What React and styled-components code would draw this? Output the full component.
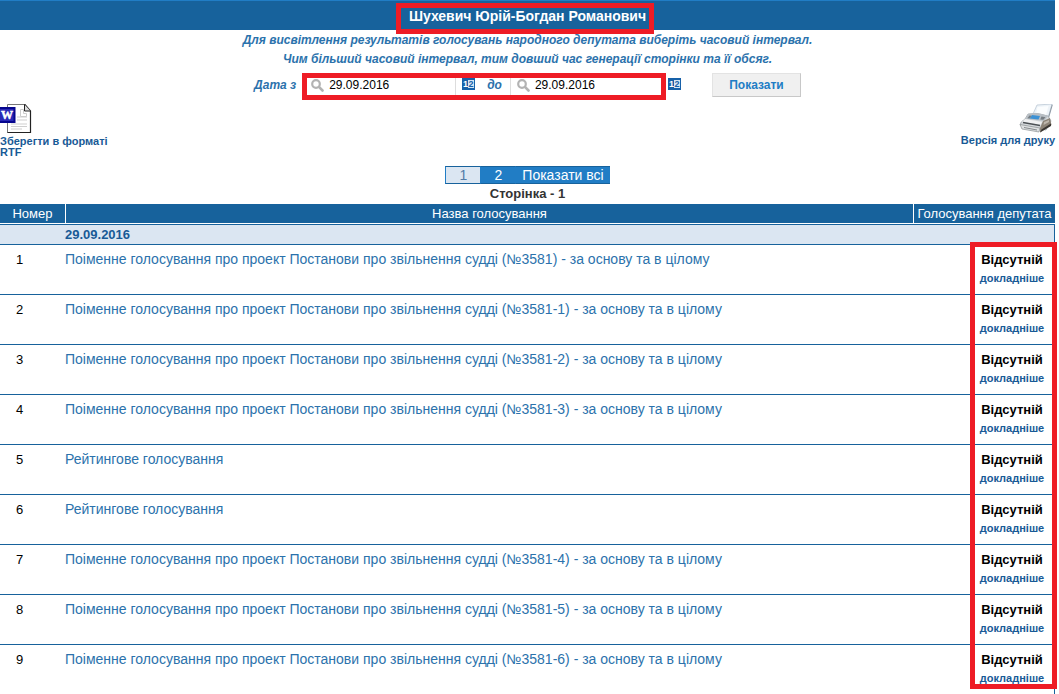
import styled, { createGlobalStyle } from "styled-components";

const colors = {
  navy: "#17629c",
  blue: "#217dc5",
  link: "#2b72ac",
  deepLink: "#185a96",
  pale: "#dbe6f2",
  red: "#ee1c25",
};

const project =
  "Поіменне голосування про проект Постанови про звільнення судді";

const votes = [
  `${project} (№3581) - за основу та в цілому`,
  `${project} (№3581-1) - за основу та в цілому`,
  `${project} (№3581-2) - за основу та в цілому`,
  `${project} (№3581-3) - за основу та в цілому`,
  "Рейтингове голосування",
  "Рейтингове голосування",
  `${project} (№3581-4) - за основу та в цілому`,
  `${project} (№3581-5) - за основу та в цілому`,
  `${project} (№3581-6) - за основу та в цілому`,
];

function CalendarIcon() {
  return (
    <svg width="13" height="12" viewBox="0 0 13 12" aria-hidden="true">
      <rect width="13" height="12" fill="#1761a9" />
      <rect x="6" y="2" width="6" height="8" fill="#d5e5f4" />
      <text x="1" y="9" fontSize="9" fontWeight="bold" fill="#fff">
        1
      </text>
      <text x="6.500" y="9" fontSize="9" fontWeight="bold" fill="#1761a9">
        2
      </text>
    </svg>
  );
}

function SearchIcon() {
  return (
    <svg width="13" height="13" viewBox="0 0 13 13" aria-hidden="true">
      <circle cx="5" cy="5" r="3.8" fill="none" stroke="#b3b3b3" strokeWidth="2.2" />
      <path d="M8.200 8.200l3.300 3.300" stroke="#b3b3b3" strokeWidth="2.600" strokeLinecap="round" />
    </svg>
  );
}

function WordIcon() {
  return (
    <svg width="32" height="30" viewBox="0 0 32 30" aria-hidden="true">
      <path d="M7.5.5h17l6 6.500v21.500h-23z" fill="#fff" stroke="#777" />
      <path d="M24.500 0l6 7v21.500H7.500" fill="none" stroke="#222" strokeWidth="1.200" />
      <path d="M24.500.5v6.500h6" fill="#ddd" stroke="#222" />
      <path
        d="M17 13h10M17 16h10M11 20h16M11 22.500h16M11 25h11"
        stroke="#cfcfcf"
      />
      <path d="M20.500 5.500h3v4h3v3h-6z" fill="#fff" stroke="#ccc" />
      <rect y="3" width="15.500" height="16" fill="#06068e" />
      <rect y="5" width="13.500" height="12" fill="#2a2ab6" />
      <text
        x="1"
        y="15"
        fontSize="12"
        fontWeight="bold"
        fill="#fff"
        stroke="#fff"
        strokeWidth=".5"
        fontFamily="Liberation Serif, serif"
      >
        W
      </text>
    </svg>
  );
}

function PrinterIcon() {
  return (
    <svg width="36" height="29" viewBox="0 0 36 29" aria-hidden="true">
      <path d="M14 10l4-9L33 0l-4 14z" fill="#edf3f8" stroke="#bcc9d5" strokeWidth=".8" />
      <path d="M18.500 3l11-1-2.500 9-10-1z" fill="#fbfdfe" />
      <path d="M33 0l.6 1.500L30 14l-1-.5z" fill="#8d99a4" />
      <path d="M9 10q10-2 20 2l3 5-5 9L1 21q0-3 5-6z" fill="#d5d9dc" stroke="#9a9fa3" strokeWidth=".7" />
      <path d="M9 10q10-2 20 2l-4 5-18-2z" fill="#b7bec4" />
      <path d="M13 11l8 1-1.500 3.500-9-1z" fill="#3c91d4" />
      <path d="M10.500 11.500l2 .2-2 2.800-2-.3zM22.500 12.500l4 .8-2.200 2.500-3-.4z" fill="#757c82" />
      <path d="M6 15l17 3-1.500 3L3 18z" fill="#f0f1f2" />
      <path d="M4 18.500l17 3" stroke="#4c5155" strokeWidth="1.300" />
      <path d="M1 20.500l20 3.500-1 4L3 25z" fill="#dfe1e2" stroke="#8b9092" strokeWidth=".7" />
      <path d="M5 23.500l13 2.500" stroke="#858a8d" />
      <path d="M21 24l3-7 7-3 1.500 7L21 28.500z" fill="#8c8377" />
      <path d="M22.500 25.500l9.500-6v2.500L21 28.500z" fill="#393531" />
      <path d="M25 18l5-2v2l-5.500 3z" fill="#bdb6ac" />
    </svg>
  );
}

function DateField({ id }) {
  return (
    <DateBox>
      <SearchIcon />
      <DateInput id={id} type="text" defaultValue="29.09.2016" />
    </DateBox>
  );
}

function App() {
  return (
    <>
      <GlobalStyle />
      <Page>
        <Header>
          <Name>
            Шухевич Юрій-Богдан Романович
            <NameMark />
          </Name>
        </Header>
        <Hint>
          Для висвітлення результатів голосувань народного депутата виберіть
          часовий інтервал.
          <br />
          Чим більший часовий інтервал, тим довший час генерації сторінки та її
          обсяг.
        </Hint>
        <Filter onSubmit={(e) => e.preventDefault()}>
          <FilterLabel htmlFor="from">Дата з</FilterLabel>
          <Dates>
            <DateField id="from" />
            <PickerButton type="button" aria-label="Календар">
              <CalendarIcon />
            </PickerButton>
            <FilterLabel htmlFor="to">до</FilterLabel>
            <DateField id="to" />
            <DatesMark />
          </Dates>
          <PickerButton type="button" aria-label="Календар">
            <CalendarIcon />
          </PickerButton>
          <SubmitButton type="submit">Показати</SubmitButton>
        </Filter>
        <Tools>
          <ToolLink href="#rtf">
            <WordIcon />
            Зберегти в форматі RTF
          </ToolLink>
          <ToolLink href="#print" $right>
            <PrinterIcon />
            Версія для друку
          </ToolLink>
        </Tools>
        <Pager>
          <PageLink href="#1" $current>
            1
          </PageLink>
          <PageLink href="#2">2</PageLink>
          <PageLink href="#all">Показати всі</PageLink>
        </Pager>
        <PageTitle>Сторінка - 1</PageTitle>
        <TableWrapper>
          <Table>
            <thead>
              <tr>
                <HeadCell $width="65px">Номер</HeadCell>
                <HeadCell>Назва голосування</HeadCell>
                <HeadCell $width="142px">Голосування депутата</HeadCell>
              </tr>
            </thead>
            <tbody>
              <DateRow>
                <td />
                <td colSpan={2}>29.09.2016</td>
              </DateRow>
              {votes.map((title, i) => (
                <VoteRow key={i}>
                  <NumberCell>{i + 1}</NumberCell>
                  <td>
                    <VoteLink href={`#vote${i + 1}`}>{title}</VoteLink>
                  </td>
                  <ResultCell>
                    <Result>
                      Відсутній
                      <MoreLink href={`#more${i + 1}`}>докладніше</MoreLink>
                    </Result>
                  </ResultCell>
                </VoteRow>
              ))}
            </tbody>
          </Table>
          <ResultsMark />
        </TableWrapper>
      </Page>
    </>
  );
}

const GlobalStyle = createGlobalStyle`
  * {
    box-sizing: border-box;
  }

  body {
    margin: 0;
    background-color: #fff;
    font-family: "Liberation Sans", Arial, sans-serif;
    font-size: 14px;
  }

  a {
    text-decoration: none;
  }

  svg {
    display: block;
    flex-shrink: 0;
    font-family: "Liberation Sans", Arial, sans-serif;
  }
`;

const Page = styled.main`
  margin-right: 4px;
`;

const Header = styled.header`
  height: 30px;
  display: flex;
  justify-content: center;
  border-top: 1px solid ${colors.blue};
  background-color: ${colors.navy};
`;

const Name = styled.h1`
  position: relative;
  margin: 0;
  font-size: 14px;
  line-height: 30px;
  color: #fff;
`;

const Mark = styled.div`
  position: absolute;
  border: 5px solid ${colors.red};
  pointer-events: none;
`;

const NameMark = styled(Mark)`
  top: 2px;
  bottom: -4px;
  left: -13px;
  right: -8px;
`;

const Hint = styled.p`
  margin: 0;
  padding-top: 1px;
  text-align: center;
  font-size: 12px;
  font-style: italic;
  font-weight: bold;
  line-height: 19px;
  color: ${colors.link};
`;

const Filter = styled.form`
  margin-top: 4px;
  display: flex;
  justify-content: center;
  align-items: flex-start;
`;

const FilterLabel = styled.label`
  font-size: 12px;
  font-style: italic;
  font-weight: bold;
  line-height: 24px;
  color: ${colors.link};
`;

const Dates = styled.div`
  position: relative;
  display: flex;
  margin-left: 8px;
`;

const DatesMark = styled(Mark)`
  top: 0;
  bottom: -3px;
  left: -2px;
  right: -4px;
`;

const DateBox = styled.div`
  width: 152px;
  height: 24px;
  padding-left: 6px;
  display: flex;
  align-items: center;
  gap: 5px;
  border: 1px solid #ddd;

  label + & {
    margin-left: 8px;
  }
`;

const DateInput = styled.input`
  width: 100%;
  min-width: 0;
  padding: 0;
  border: 0;
  outline: 0;
  background: none;
  font-family: inherit;
  font-size: 12px;
  color: #000;
`;

const PickerButton = styled.button`
  margin: 5px 12px 0 6px;
  padding: 0;
  height: 12px;
  border: 0;
  background: none;
  cursor: pointer;
`;

const SubmitButton = styled.button`
  margin-left: 19px;
  width: 89px;
  height: 24px;
  padding: 0;
  border: 1px solid #e3e3e3;
  border-right-color: #c8c8c8;
  border-bottom-color: #c8c8c8;
  background-color: #f0f0f0;
  font-family: inherit;
  font-size: 12px;
  font-weight: bold;
  color: ${colors.blue};
  cursor: pointer;
`;

const Tools = styled.div`
  margin-top: 7px;
  height: 62px;
  display: flex;
  justify-content: space-between;
`;

const ToolLink = styled.a`
  width: 120px;
  display: flex;
  flex-direction: column;
  gap: 2px;
  align-items: ${({ $right }) => ($right ? "flex-end" : "flex-start")};
  font-size: 11px;
  font-weight: bold;
  line-height: 11px;
  color: ${colors.deepLink};
`;

const Pager = styled.nav`
  display: flex;
  justify-content: center;
`;

const PageLink = styled.a`
  min-width: 35px;
  height: 18px;
  padding: 0 6px;
  text-align: center;
  line-height: 17px;
  border: 1px solid ${colors.navy};
  border-left-color: ${colors.blue};
  border-right-width: 0;
  background-color: ${({ $current }) =>
    $current ? colors.pale : colors.blue};
  color: ${({ $current }) => ($current ? "#537ca8" : "#fff")};
`;

const PageTitle = styled.h2`
  margin: 2px 0;
  text-align: center;
  font-size: 13px;
  line-height: 16px;
  color: #333;
`;

const TableWrapper = styled.div`
  position: relative;
`;

const Table = styled.table`
  width: 100%;
  table-layout: fixed;
  border-collapse: separate;
  border-spacing: 0;

  td {
    padding: 0;
    vertical-align: top;
  }
`;

const HeadCell = styled.th`
  width: ${({ $width }) => $width || "auto"};
  height: 20px;
  padding: 0;
  border-bottom: 1px solid #fff;
  background-color: ${colors.navy};
  font-size: 13px;
  font-weight: normal;
  line-height: 19px;
  white-space: nowrap;
  color: #fff;

  & + & {
    border-left: 1px solid #fff;
  }
`;

const DateRow = styled.tr`
  td {
    height: 21px;
    border-top: 1px solid ${colors.navy};
    border-bottom: 1px solid ${colors.navy};
    background-color: ${colors.pale};
    font-size: 13px;
    font-weight: bold;
    line-height: 19px;
    color: ${colors.deepLink};
  }

  td:last-child {
    border-right: 1px solid ${colors.navy};
  }
`;

const VoteRow = styled.tr`
  td {
    height: 50px;
    padding-top: 5px;
    border-bottom: 1px solid ${colors.navy};
    line-height: 19px;
  }

  &:last-child td {
    height: 49px;
    border-bottom: 0;
  }
`;

const NumberCell = styled.td`
  && {
    padding-left: 16px;
    font-size: 13px;
  }
`;

const VoteLink = styled.a`
  color: ${colors.link};
`;

const ResultCell = styled.td`
  border-right: 1px solid ${colors.navy};
`;

const Result = styled.div`
  width: 84px;
  margin-left: auto;
  text-align: center;
  font-size: 13px;
  font-weight: bold;
`;

const MoreLink = styled.a`
  display: block;
  font-size: 11px;
  color: ${colors.deepLink};
`;

const ResultsMark = styled(Mark)`
  top: 38px;
  bottom: 5px;
  right: -2px;
  width: 87px;
`;

export default App;
